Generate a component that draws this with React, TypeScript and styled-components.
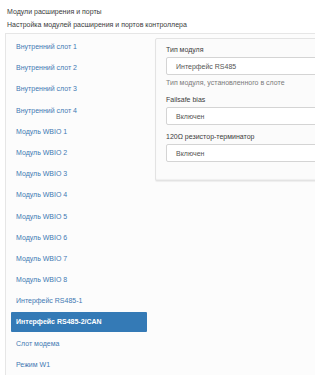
import React, { useState } from "react";
import styled, { createGlobalStyle } from "styled-components";

const GlobalStyle = createGlobalStyle`
  html, body {
    margin: 0;
    padding: 0;
    background: #ffffff;
    overflow: hidden;
  }
  body {
    font-family: "Liberation Sans", Arial, sans-serif;
    font-size: 7px;
    color: #3b3b3b;
  }
`;

const Page = styled.div`
  width: 380px;
  padding: 6px 0 0 5px;
`;

const Title = styled.div`
  padding-left: 2px;
  line-height: 12px;
`;

const SubTitle = styled.div`
  padding-left: 2px;
  line-height: 13px;
  margin-bottom: 2px;
`;

const Panel = styled.div`
  display: flex;
  align-items: flex-start;
  gap: 8px;
  padding: 3px 0 0 5px;
  border: 1px solid #e6e6e6;
  background: #fcfcfc;
  height: 400px;
`;

const NavList = styled.ul`
  list-style: none;
  margin: 0;
  padding: 0;
  width: 136px;
  flex-shrink: 0;
  display: flex;
  flex-direction: column;
  gap: 1.2px;
`;

const NavItem = styled.li<{ $active?: boolean }>`
  height: 20px;
  line-height: 20px;
  padding-left: 5px;
  border-radius: 1px;
  cursor: pointer;
  color: ${(p) => (p.$active ? "#ffffff" : "#3f79b3")};
  background: ${(p) => (p.$active ? "#347ab6" : "transparent")};
  font-weight: ${(p) => (p.$active ? 600 : 400)};
  white-space: nowrap;
`;

const SettingsBox = styled.div`
  margin-top: 1px;
  flex: 1;
  padding: 5px 10px 18px 10px;
  border: 1px solid #e3e3e3;
  border-radius: 2px;
  background: #fbfbfb;
  box-shadow: inset 0 -1px 1px rgba(0, 0, 0, 0.05), 0 1px 1px rgba(0, 0, 0, 0.06);
`;

const FormGroup = styled.div`
  & + & {
    margin-top: 6px;
  }
`;

const Label = styled.div`
  line-height: 11px;
  margin-bottom: 2px;
  color: #3b3b3b;
`;

const Select = styled.div`
  height: 18px;
  line-height: 18px;
  padding-left: 9px;
  border: 1px solid #d4d4d4;
  border-radius: 2px;
  background: #ffffff;
  color: #555555;
  box-sizing: border-box;
`;

const Help = styled.div`
  margin-top: 2px;
  line-height: 11px;
  color: #7a7a7a;
`;

const items = [
  "Внутренний слот 1",
  "Внутренний слот 2",
  "Внутренний слот 3",
  "Внутренний слот 4",
  "Модуль WBIO 1",
  "Модуль WBIO 2",
  "Модуль WBIO 3",
  "Модуль WBIO 4",
  "Модуль WBIO 5",
  "Модуль WBIO 6",
  "Модуль WBIO 7",
  "Модуль WBIO 8",
  "Интерфейс RS485-1",
  "Интерфейс RS485-2/CAN",
  "Слот модема",
  "Режим W1",
];

export default function App() {
  const [active, setActive] = useState(13);
  return (
    <Page>
      <GlobalStyle />
      <Title>Модули расширения и порты</Title>
      <SubTitle>Настройка модулей расширения и портов контроллера</SubTitle>
      <Panel>
        <NavList>
          {items.map((name, index) => (
            <NavItem
              key={`item${index}`}
              $active={index === active}
              onClick={() => setActive(index)}
            >
              {name}
            </NavItem>
          ))}
        </NavList>
        <SettingsBox>
          <FormGroup>
            <Label>Тип модуля</Label>
            <Select>Интерфейс RS485</Select>
            <Help>Тип модуля, установленного в слоте</Help>
          </FormGroup>
          <FormGroup>
            <Label>Failsafe bias</Label>
            <Select>Включен</Select>
          </FormGroup>
          <FormGroup>
            <Label>120Ω резистор-терминатор</Label>
            <Select>Включен</Select>
          </FormGroup>
        </SettingsBox>
      </Panel>
    </Page>
  );
}
